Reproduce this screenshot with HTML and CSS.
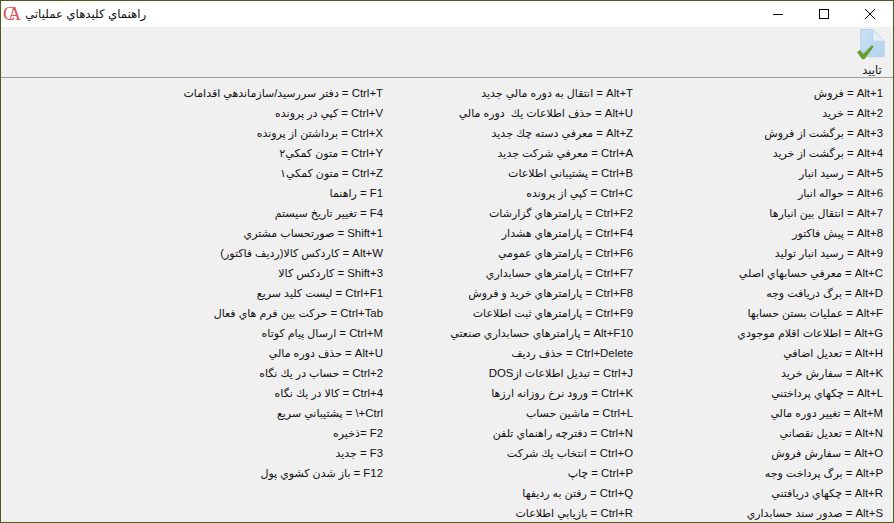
FILE: index.html
```html
<!DOCTYPE html>
<html lang="fa">
<head>
<meta charset="utf-8">
<title>راهنماي كليدهاي عملياتي</title>
<link rel="stylesheet" href="styles.css">
</head>
<body>
<div class="window">
  <header class="titlebar">
    <span class="logo">CA</span>
    <span class="title">راهنماي كليدهاي عملياتي</span>
    <div class="controls">
      <div class="ctl"><svg width="12" height="12" viewBox="0 0 12 12"><path d="M1 6.500h10" stroke="#000" fill="none"/></svg></div>
      <div class="ctl"><svg width="12" height="12" viewBox="0 0 12 12"><rect x="1.500" y="1.500" width="9" height="9" stroke="#000" fill="none"/></svg></div>
      <div class="ctl"><svg width="12" height="12" viewBox="0 0 12 12"><path d="M1 1l10 10M11 1L1 11" stroke="#000" fill="none"/></svg></div>
    </div>
  </header>
  <div class="toolbar">
    <div class="tool">
      <svg class="tool-icon" width="32" height="33" viewBox="0 0 32 33">
        <defs><linearGradient id="pg" x1="0" y1="0" x2="1" y2="1"><stop offset="0" stop-color="#cbe0f6"/><stop offset="1" stop-color="#b3d2f0"/></linearGradient></defs>
        <path d="M4.500 .5H17L28.500 12.500V28.500H4.500Z" fill="url(#pg)" stroke="#b5cfe8"/>
        <path d="M17 .5V12.500H28.500Z" fill="#e8f0f9" stroke="#c0d4e8"/>
        <path d="M1 24L3.500 22L7 26L16 17L17.500 18L8 31H6Z" fill="#64a326" stroke="#4a8719" stroke-width=".5"/>
      </svg>
      <span class="tool-label">تاييد</span>
    </div>
  </div>
  <main class="keys">
    <ul class="col">
      <li><span class="k">Alt+1 =</span> فروش</li>
      <li><span class="k">Alt+2 =</span> خريد</li>
      <li><span class="k">Alt+3 =</span> برگشت از فروش</li>
      <li><span class="k">Alt+4 =</span> برگشت از خريد</li>
      <li><span class="k">Alt+5 =</span> رسيد انبار</li>
      <li><span class="k">Alt+6 =</span> حواله انبار</li>
      <li><span class="k">Alt+7 =</span> انتقال بين انبارها</li>
      <li><span class="k">Alt+8 =</span> پيش فاكتور</li>
      <li><span class="k">Alt+9 =</span> رسيد انبار توليد</li>
      <li><span class="k">Alt+C =</span> معرفي حسابهاي اصلي</li>
      <li><span class="k">Alt+D =</span> برگ دريافت وجه</li>
      <li><span class="k">Alt+F =</span> عمليات بستن حسابها</li>
      <li><span class="k">Alt+G =</span> اطلاعات اقلام موجودي</li>
      <li><span class="k">Alt+H =</span> تعديل اضافي</li>
      <li><span class="k">Alt+K =</span> سفارش خريد</li>
      <li><span class="k">Alt+L =</span> چكهاي پرداختني</li>
      <li><span class="k">Alt+M =</span> تغيير دوره مالي</li>
      <li><span class="k">Alt+N =</span> تعديل نقصاني</li>
      <li><span class="k">Alt+O =</span> سفارش فروش</li>
      <li><span class="k">Alt+P =</span> برگ پرداخت وجه</li>
      <li><span class="k">Alt+R =</span> چكهاي دريافتني</li>
      <li><span class="k">Alt+S =</span> صدور سند حسابداري</li>
    </ul>
    <ul class="col">
      <li><span class="k">Alt+T =</span> انتقال به دوره مالي جديد</li>
      <li><span class="k">Alt+U =</span> حذف اطلاعات يك  دوره مالي</li>
      <li><span class="k">Alt+Z =</span> معرفي دسته چك جديد</li>
      <li><span class="k">Ctrl+A =</span> معرفي شركت جديد</li>
      <li><span class="k">Ctrl+B =</span> پشتيباني اطلاعات</li>
      <li><span class="k">Ctrl+C =</span> كپي از پرونده</li>
      <li><span class="k">Ctrl+F2 =</span> پارامترهاي گزارشات</li>
      <li><span class="k">Ctrl+F4 =</span> پارامترهاي هشدار</li>
      <li><span class="k">Ctrl+F6 =</span> پارامترهاي عمومي</li>
      <li><span class="k">Ctrl+F7 =</span> پارامترهاي حسابداري</li>
      <li><span class="k">Ctrl+F8 =</span> پارامترهاي خريد و فروش</li>
      <li><span class="k">Ctrl+F9 =</span> پارامترهاي ثبت اطلاعات</li>
      <li><span class="k">Alt+F10 =</span> پارامترهاي حسابداري صنعتي</li>
      <li><span class="k">Ctrl+Delete =</span> حذف رديف</li>
      <li><span class="k">Ctrl+J =</span> تبديل اطلاعات از<span class="k">DOS</span></li>
      <li><span class="k">Ctrl+K =</span> ورود نرخ روزانه ارزها</li>
      <li><span class="k">Ctrl+L =</span> ماشين حساب</li>
      <li><span class="k">Ctrl+N =</span> دفترچه راهنماي تلفن</li>
      <li><span class="k">Ctrl+O =</span> انتخاب يك شركت</li>
      <li><span class="k">Ctrl+P =</span> چاپ</li>
      <li><span class="k">Ctrl+Q =</span> رفتن به رديفها</li>
      <li><span class="k">Ctrl+R =</span> بازيابي اطلاعات</li>
    </ul>
    <ul class="col">
      <li><span class="k">Ctrl+T =</span> دفتر سررسيد/سازماندهي اقدامات</li>
      <li><span class="k">Ctrl+V =</span> كپي در پرونده</li>
      <li><span class="k">Ctrl+X =</span> برداشتن از پرونده</li>
      <li><span class="k">Ctrl+Y =</span> متون كمكي٢</li>
      <li><span class="k">Ctrl+Z =</span> متون كمكي١</li>
      <li><span class="k">F1 =</span> راهنما</li>
      <li><span class="k">F4 =</span> تغيير تاريخ سيستم</li>
      <li><span class="k">Shift+1 =</span> صورتحساب مشتري</li>
      <li><span class="k">Alt+W =</span> كاردكس كالا(رديف فاكتور)</li>
      <li><span class="k">Shift+3 =</span> كاردكس كالا</li>
      <li><span class="k">Ctrl+F1 =</span> ليست كليد سريع</li>
      <li><span class="k">Ctrl+Tab =</span> حركت بين فرم هاي فعال</li>
      <li><span class="k">Ctrl+M =</span> ارسال پيام كوتاه</li>
      <li><span class="k">Alt+U =</span> حذف دوره مالي</li>
      <li><span class="k">Ctrl+2 =</span> حساب در يك نگاه</li>
      <li><span class="k">Ctrl+4 =</span> كالا در يك نگاه</li>
      <li><span class="k">Ctrl+\ =</span> پشتيباني سريع</li>
      <li><span class="k">F2 =</span>ذخيره</li>
      <li><span class="k">F3 =</span> جديد</li>
      <li><span class="k">F12 =</span> باز شدن كشوي پول</li>
    </ul>
  </main>
</div>
</body>
</html>
```
FILE: styles.css
```css
* { box-sizing: border-box; }
html, body { margin: 0; height: 100%; }
body { font-family: "Liberation Sans", "DejaVu Sans", sans-serif; font-size: 11px; color: #111; overflow: hidden; }
.window { height: 100vh; display: flex; flex-direction: column; border: 1px solid #4d5a1e; background: #f0f0f0; overflow: hidden; }
.titlebar { height: 26px; flex: none; background: #fff; display: flex; align-items: center; padding-left: 2px; }
.logo { width: 20px; flex: none; font-family: "Liberation Serif", serif; font-size: 18px; line-height: 18px; letter-spacing: -7px; color: #d8505a; }
.title { font-size: 11.8px; margin-left: 2px; }
.controls { margin-left: auto; display: flex; }
.ctl { width: 46px; height: 26px; display: flex; align-items: center; justify-content: center; }
.toolbar { height: 51px; flex: none; border-bottom: 1px solid #a0a0a0; display: flex; justify-content: flex-end; padding-right: 4px; }
.tool { width: 34px; display: flex; flex-direction: column; align-items: center; padding-top: 2px; }
.tool-label { font-size: 11.5px; line-height: 13px; margin-top: 3px; }
.keys { flex: 1; display: flex; flex-direction: row-reverse; justify-content: flex-start; padding-top: 5px; padding-right: 10px; }
.col { list-style: none; margin: 0; padding: 0; width: 250px; flex: none; direction: rtl; }
.col li { height: 20px; line-height: 20px; white-space: pre; }
.k { font-size: 11.4px; }
```
